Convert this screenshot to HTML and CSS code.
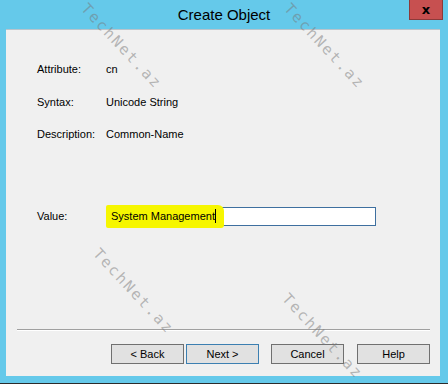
FILE: index.html
```html
<!DOCTYPE html>
<html>
<head>
    <title>Create Object</title>
    <link rel="stylesheet" href="styles.css">
</head>
<body>
    <div class="window">
        <div class="titlebar">
            <div class="spacer"></div>
            <div class="title">Create Object</div>
            <button class="close">x</button>
        </div>
        <div class="client">
            <div class="info">
                <div class="label">Attribute:</div><div>cn</div>
                <div class="label">Syntax:</div><div>Unicode String</div>
                <div class="label">Description:</div><div>Common-Name</div>
            </div>
            <div class="value-row">
                <div class="label">Value:</div>
                <div class="textbox"><span class="marker">System Management<span class="caret"></span></span></div>
            </div>
            <div class="separator"></div>
            <div class="buttons">
                <button class="btn">&lt; Back</button>
                <button class="btn default">Next &gt;</button>
                <button class="btn cancel">Cancel</button>
                <button class="btn help">Help</button>
            </div>
        </div>
    </div>
    <!-- watermark stamps -->
    <div class="mark" style="left: 89px; top: 1px;">TechNet.az</div>
    <div class="mark" style="left: 292px; top: 1px;">TechNet.az</div>
    <div class="mark" style="left: 101px; top: 246px;">TechNet.az</div>
    <div class="mark" style="left: 290px; top: 291px;">TechNet.az</div>
</body>
</html>
```

FILE: styles.css
```css
html {
    overflow: hidden;
}
body {
    margin: 0;
    width: 448px;
    height: 383px;
    overflow: hidden;
    position: relative;
    background-color: #65c9ea;
    border-bottom: 1px solid #2b2b2b;
    font-family: "Liberation Sans", Arial, sans-serif;
    font-size: 11px;
    color: #000;
}
.titlebar {
    display: flex;
    height: 29px;
}
.spacer {
    width: 39px;
}
.title {
    flex: 1;
    text-align: center;
    font-size: 15px;
    line-height: 29px;
    color: #000;
}
.close {
    width: 34px;
    height: 20px;
    margin-right: 5px;
    padding: 0;
    border: 1px solid #8c3a3a;
    border-top: none;
    background-color: #c75050;
    font-family: "DejaVu Sans", sans-serif;
    font-weight: bold;
    font-size: 13px;
    line-height: 16px;
    color: #000;
}
.client {
    margin: 0 8px 0 6px;
    height: 347px;
    background-color: #f0f0f0;
    border-top: 1px solid #b9c4cc;
    box-sizing: border-box;
    display: flex;
    flex-direction: column;
}
.info {
    display: grid;
    grid-template-columns: 69px auto;
    grid-auto-rows: 32.5px;
    align-items: center;
    padding: 23px 0 0 31px;
}
.value-row {
    display: flex;
    align-items: center;
    margin-top: 56px;
    padding-left: 31px;
}
.value-row .label {
    width: 69px;
}
.textbox {
    width: 268px;
    height: 17px;
    border: 1px solid #3e6f9f;
    background-color: #fff;
    display: flex;
    align-items: center;
}
.marker {
    display: flex;
    align-items: center;
    height: 23px;
    margin-left: -1px;
    padding: 0 8px 0 5px;
    background-color: #f6f600;
    border-radius: 2px 6px 3px 2px;
}
.caret {
    width: 1px;
    height: 14px;
    background-color: #000;
}
.separator {
    margin: auto 10px 0 11px;
    border-top: 1px solid #a0a0a0;
    border-bottom: 1px solid #fff;
}
.buttons {
    display: flex;
    padding: 13px 0 12px 105px;
}
.btn {
    width: 73px;
    height: 20px;
    padding: 0;
    border: 1px solid #707070;
    background-color: #e1e1e1;
    font-family: "Liberation Sans", Arial, sans-serif;
    font-size: 11px;
    color: #000;
}
.btn.default {
    margin-left: 2px;
    border-color: #3c7fb1;
}
.btn.cancel {
    margin-left: 12px;
}
.btn.help {
    margin-left: 13px;
}
.mark {
    position: absolute;
    transform: rotate(47deg);
    transform-origin: 0 0;
    font-family: "DejaVu Sans Mono", monospace;
    font-size: 15px;
    line-height: 15px;
    letter-spacing: 2px;
    color: rgba(120, 120, 120, 0.5);
    white-space: nowrap;
}
```
